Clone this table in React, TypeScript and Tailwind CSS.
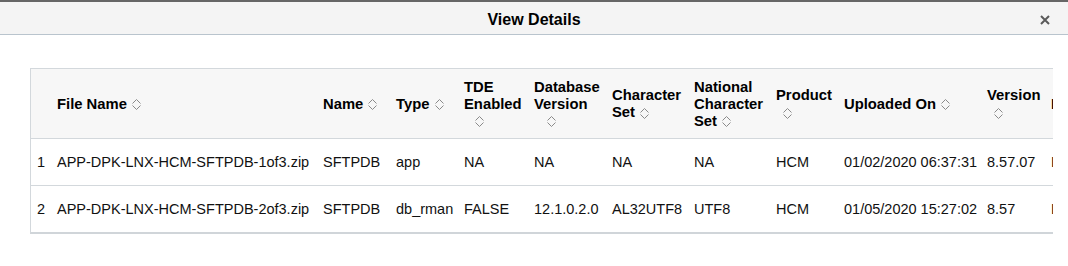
import React from "react";

function SortIcon() {
  return (
    <svg width="11" height="13" viewBox="0 0 11 13" className="inline-block align-middle" fill="none" stroke="#8a8a8a" strokeWidth="1">
      <path d="M1.5 5.5 L5.5 1.5 L9.5 5.5" />
      <path d="M1.5 7.5 L5.5 11.5 L9.5 7.5" />
    </svg>
  );
}

const cols: { w: number; label: React.ReactNode }[] = [
  { w: 20, label: "" },
  { w: 266, label: <>File Name <SortIcon /></> },
  { w: 73, label: <>Name <SortIcon /></> },
  { w: 68, label: <>Type <SortIcon /></> },
  { w: 70, label: <>TDE<br />Enabled<br /><span className="pl-[10px]"><SortIcon /></span></> },
  { w: 78, label: <>Database<br />Version<br /><span className="pl-[12px]"><SortIcon /></span></> },
  { w: 82, label: <>Character<br />Set <SortIcon /></> },
  { w: 82, label: <>National<br />Character<br />Set <SortIcon /></> },
  { w: 68, label: <>Product<br /><span className="pl-[6px]"><SortIcon /></span></> },
  { w: 143, label: <>Uploaded On <SortIcon /></> },
  { w: 64, label: <>Version<br /><span className="pl-[6px]"><SortIcon /></span></> },
  { w: 90, label: <>Platform <SortIcon /></> },
];

const rows = [
  ["1", "APP-DPK-LNX-HCM-SFTPDB-1of3.zip", "SFTPDB", "app", "NA", "NA", "NA", "NA", "HCM", "01/02/2020 06:37:31", "8.57.07", "Linux"],
  ["2", "APP-DPK-LNX-HCM-SFTPDB-2of3.zip", "SFTPDB", "db_rman", "FALSE", "12.1.0.2.0", "AL32UTF8", "UTF8", "HCM", "01/05/2020 15:27:02", "8.57", "Linux"],
];

export default function App() {
  return (
    <div className="w-[1068px] h-[266px] bg-white overflow-hidden" style={{ fontFamily: '"Liberation Sans", Arial, sans-serif' }}>
      <div className="h-[35px] bg-[#f4f4f4] border-t-2 border-[#666666] border-b border-b-[#b9c4cd] flex items-center pt-[3px] relative">
        <div className="flex-1 text-center text-[16px] font-bold text-black">View Details</div>
        <div className="absolute right-[18px] top-[13px] leading-none">
          <svg width="10" height="10" viewBox="0 0 10 10" stroke="#5a5a5a" strokeWidth="2">
            <path d="M1 1 L9 9 M9 1 L1 9" />
          </svg>
        </div>
      </div>
      <div className="pt-[33px] pl-[30px]">
        <div className="w-[1023px] overflow-hidden border-l border-t border-[#d3d8dc] border-b-2 border-b-[#d0d5d9]">
          <table className="table-fixed border-collapse text-black" style={{ width: cols.reduce((a, c) => a + c.w, 0) }}>
            <colgroup>
              {cols.map((c, i) => (
                <col key={i} style={{ width: c.w }} />
              ))}
            </colgroup>
            <thead>
              <tr className="h-[69px] bg-[#f7f7f7]">
                {cols.map((c, i) => (
                  <th key={i} className="text-left font-bold align-middle px-[6px] pt-[2px] text-[14.8px] leading-[17px] border-b border-[#d3d8dc] whitespace-nowrap">
                    {c.label}
                  </th>
                ))}
              </tr>
            </thead>
            <tbody>
              {rows.map((r, ri) => (
                <tr key={ri} className={ri === 0 ? "h-[47px] border-b border-[#d3d8dc]" : "h-[47px]"}>
                  {r.map((v, i) => (
                    <td key={i} className="px-[6px] pt-[3px] align-middle whitespace-nowrap text-[14.5px] text-[#111]">
                      {v}
                    </td>
                  ))}
                </tr>
              ))}
            </tbody>
          </table>
        </div>
      </div>
    </div>
  );
}
